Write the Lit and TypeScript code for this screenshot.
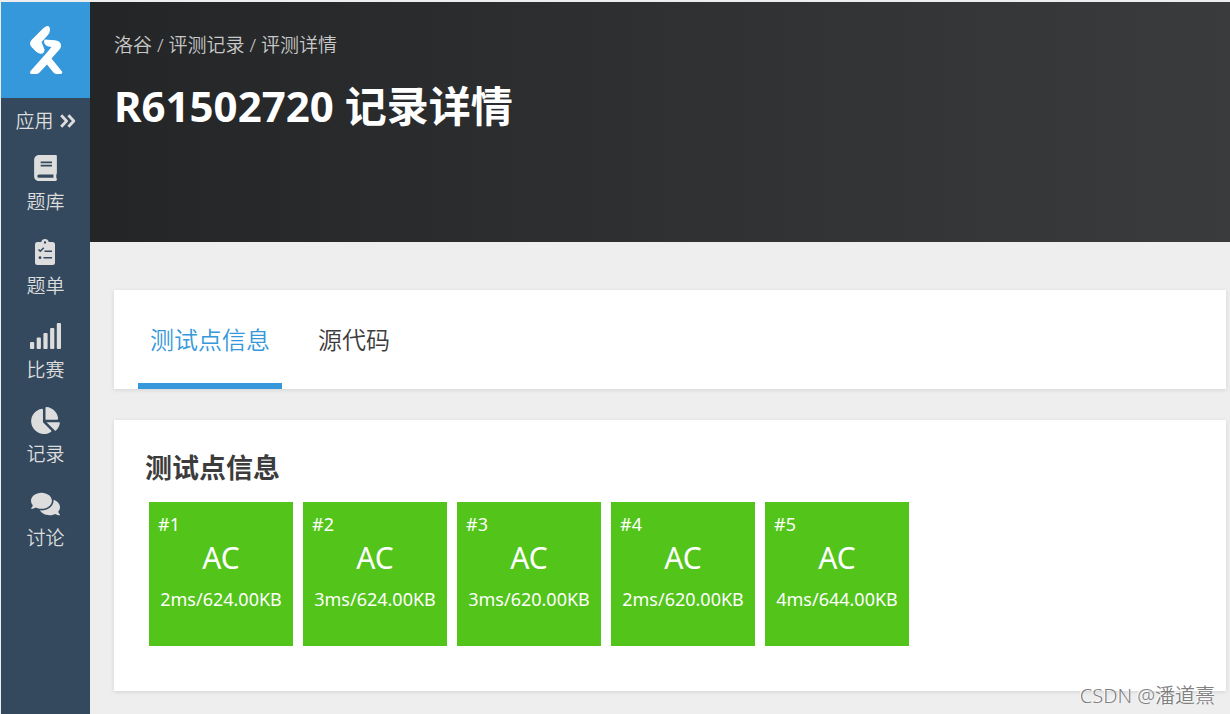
import { LitElement, html, css, svg } from "lit";
import { customElement, property, state } from "lit/decorators.js";

const bookIcon = svg`<svg viewBox="0 0 448 512" width="23" height="26" aria-hidden="true"><path fill="currentColor" d="M448 360V24c0-13.3-10.7-24-24-24H96C43 0 0 43 0 96v320c0 53 43 96 96 96h328c13.3 0 24-10.7 24-24v-16c0-7.5-3.5-14.3-8.9-18.7-4.2-15.4-4.2-59.3 0-74.7 5.4-4.3 8.900-11.1 8.900-18.600zM128 134c0-3.300 2.700-6 6-6h212c3.300 0 6 2.700 6 6v20c0 3.300-2.700 6-6 6H134c-3.300 0-6-2.700-6-6v-20zm0 64c0-3.300 2.700-6 6-6h212c3.300 0 6 2.700 6 6v20c0 3.300-2.700 6-6 6H134c-3.300 0-6-2.700-6-6v-20zm253.400 250H96c-17.700 0-32-14.300-32-32 0-17.600 14.400-32 32-32h285.400c-1.900 17.100-1.900 46.900 0 64z"/></svg>`;

const listIcon = svg`<svg viewBox="0 0 21 26" width="21" height="26" aria-hidden="true"><path fill="currentColor" fill-rule="evenodd" d="M2.500 3H6.200C6.600 1.300 8.100 0 10 0s3.400 1.300 3.800 3H17.500A2.500 2.500 0 0 1 20 5.500v18a2.500 2.500 0 0 1-2.500 2.500h-15A2.500 2.500 0 0 1 0 23.500v-18A2.500 2.500 0 0 1 2.500 3zM10 2.200a1.200 1.200 0 1 0 0 2.400 1.200 1.200 0 0 0 0-2.400z"/><path fill="none" stroke="#34495e" stroke-width="1.500" d="M3.500 10.500l1.800 1.800L8.800 8.700M9.500 12.300H17M8.500 18.700H17"/><circle cx="5" cy="18.700" r="1.400" fill="#34495e"/></svg>`;

const signalIcon = svg`<svg viewBox="0 0 31 26" width="31" height="26" aria-hidden="true"><g fill="currentColor"><rect x="0" y="19" width="4.200" height="7" rx="1"/><rect x="6.700" y="14.500" width="4.200" height="11.500" rx="1"/><rect x="13.400" y="10" width="4.200" height="16" rx="1"/><rect x="20.100" y="5" width="4.200" height="21" rx="1"/><rect x="26.800" y="0" width="4.200" height="26" rx="1"/></g></svg>`;

const pieIcon = svg`<svg viewBox="0 0 544 512" width="29" height="27" aria-hidden="true"><path fill="currentColor" d="M527.79 288H290.5l158.03 158.03c6.04 6.04 15.98 6.53 22.19.68 38.7-36.46 65.32-85.61 73.13-140.86 1.34-9.46-6.51-17.85-16.06-17.85zm-15.83-64.8C503.72 103.74 408.26 8.28 288.8.04 279.68-.59 272 7.1 272 16.24V240h223.77c9.14 0 16.82-7.68 16.19-16.8zM224 288V50.71c0-9.55-8.39-17.4-17.84-16.06C86.99 51.49-4.1 155.6.14 280.37 4.5 408.51 114.83 513.59 243.03 511.98c50.4-.63 96.97-16.87 135.26-44.03 7.9-5.6 8.42-17.23 1.57-24.08L224 288z"/></svg>`;

const commentsIcon = svg`<svg viewBox="0 0 576 512" width="29" height="26" aria-hidden="true"><path fill="currentColor" d="M416 192c0-88.4-93.1-160-208-160S0 103.6 0 192c0 34.3 14.1 65.9 38 92-13.4 30.2-35.5 54.2-35.8 54.5-2.2 2.3-2.8 5.7-1.5 8.7S4.8 352 8 352c36.6 0 66.9-12.3 88.7-25 32.2 15.7 70.3 25 111.3 25 114.9 0 208-71.6 208-160zm122 220c23.9-26 38-57.7 38-92 0-66.9-53.5-124.2-129.3-148.1.9 6.6 1.3 13.3 1.3 20.1 0 105.9-107.7 192-240 192-10.8 0-21.3-.8-31.7-1.9C207.8 439.6 281.8 480 368 480c41 0 79.1-9.2 111.3-25 21.8 12.7 52.1 25 88.7 25 3.2 0 6.1-1.9 7.3-4.8 1.3-2.9.7-6.3-1.5-8.7-.3-.3-22.4-24.2-35.8-54.5z"/></svg>`;

const chevronsIcon = svg`<svg viewBox="0 0 16 14" width="16" height="14" aria-hidden="true"><path fill="none" stroke="currentColor" stroke-width="2.800" stroke-linejoin="round" d="M1.200 1.200L6.600 7l-5.400 5.800M8.400 1.200L13.800 7l-5.400 5.800"/></svg>`;

const logoIcon = svg`<svg viewBox="0 0 34 50" width="34" height="50" aria-hidden="true"><g fill="#fff"><path d="M14.500 3Q20.500-1.500 21 4.500 21 8 18.500 10.500L12.500 17l3 7.500Q15.500 29 11.500 28.800 9 28.500 7 26.500L2.500 22Q-0.500 18.500 2.500 15z"/><path d="M15.500 14.500L26 15.200Q32.500 16 32 21.500 31.800 23 30 25L22.500 33.500 33 46.500Q34 49 31 49H27.500Q25.500 49 24 47L18 39.500 10.500 47.500Q9 49 7 49H3Q0 49 1.500 46L18 27.500 22.500 22 18.500 21.300Q14 19 15.500 14.500z"/></g></svg>`;

const navItems = [
  { label: "题库", icon: bookIcon },
  { label: "题单", icon: listIcon },
  { label: "比赛", icon: signalIcon },
  { label: "记录", icon: pieIcon },
  { label: "讨论", icon: commentsIcon },
];

const testCases = [
  { id: 1, status: "AC", usage: "2ms/624.00KB" },
  { id: 2, status: "AC", usage: "3ms/624.00KB" },
  { id: 3, status: "AC", usage: "3ms/620.00KB" },
  { id: 4, status: "AC", usage: "2ms/620.00KB" },
  { id: 5, status: "AC", usage: "4ms/644.00KB" },
];

@customElement("side-bar")
class SideBar extends LitElement {
  static styles = css`
    :host {
      display: block;
      flex: none;
      width: 89px;
      background: #34495e;
      color: #ddd;
      font-size: 19px;
      font-weight: 350;
      line-height: 28px;
    }
    a {
      color: inherit;
      text-decoration: none;
    }
    .logo {
      display: flex;
      align-items: center;
      justify-content: center;
      height: 96px;
      background: #3498db;
    }
    .apps {
      display: flex;
      align-items: center;
      justify-content: center;
      gap: 6px;
      padding: 9px 0 20px;
    }
    .nav {
      display: flex;
      flex-direction: column;
      gap: 23px;
    }
    .item {
      display: flex;
      flex-direction: column;
      align-items: center;
      gap: 7px;
    }
    .icon {
      display: flex;
      align-items: center;
      height: 26px;
    }
  `;
  render() {
    return html`
      <a class="logo" href="#" aria-label="洛谷">${logoIcon}</a>
      <a class="apps" href="#apps">应用 ${chevronsIcon}</a>
      <nav class="nav">
        ${navItems.map(
          (n) => html`<a class="item" href="#nav"><span class="icon">${n.icon}</span><span>${n.label}</span></a>`
        )}
      </nav>
    `;
  }
}

@customElement("test-case")
class TestCase extends LitElement {
  static styles = css`
    :host {
      display: block;
      box-sizing: border-box;
      width: 144px;
      height: 144px;
      padding: 10px 9px;
      background: #52c41a;
      color: #fff;
      font-size: 18px;
      line-height: 24px;
    }
    .status {
      margin: 4px 0 11px;
      font-size: 30px;
      line-height: 36px;
      text-align: center;
    }
    .usage {
      text-align: center;
      white-space: nowrap;
    }
  `;
  @property({ type: Number }) number = 0;
  @property() status = "";
  @property() usage = "";
  render() {
    return html`
      <div>#${this.number}</div>
      <div class="status">${this.status}</div>
      <div class="usage">${this.usage}</div>
    `;
  }
}

@customElement("app-root")
class AppRoot extends LitElement {
  static styles = css`
    :host {
      display: flex;
      position: relative;
      box-sizing: border-box;
      min-height: 100vh;
      padding: 2px 0 0 1px;
      background: #eee;
      color: #3c3c3c;
      font-family: "Noto Sans", "Noto Sans CJK SC", sans-serif;
    }
    .page {
      flex: 1;
      min-width: 0;
    }
    .header {
      box-sizing: border-box;
      min-height: 240px;
      padding: 29px 24px;
      background: linear-gradient(to right, #232526, #3a3b3c);
      color: #fff;
    }
    .crumbs {
      color: #c8c8c8;
      font-size: 19px;
      font-weight: 350;
      line-height: 28px;
    }
    .crumbs a {
      color: inherit;
      text-decoration: none;
    }
    h1 {
      margin: 17px 0 0;
      font-size: 42px;
      line-height: 60px;
    }
    .content {
      display: flex;
      flex-direction: column;
      gap: 31px;
      padding: 48px 4px 23px 24px;
    }
    .card {
      background: #fff;
      box-shadow: 0 1px 4px rgba(26, 26, 26, 0.12);
    }
    .tabs {
      display: flex;
      gap: 24px;
      padding: 0 24px;
    }
    .tab {
      height: 99px;
      padding: 6px 12px 0;
      border: 0;
      border-bottom: 6px solid transparent;
      background: none;
      color: inherit;
      font: inherit;
      font-size: 24px;
      font-weight: 350;
      line-height: 36px;
      cursor: pointer;
    }
    .tab.active {
      border-color: #3498db;
      color: #3498db;
    }
    .results {
      padding: 32px 31px 45px;
    }
    h2 {
      margin: 0 0 18px;
      font-size: 27px;
      line-height: 32px;
    }
    .cases {
      display: flex;
      flex-wrap: wrap;
      gap: 10px;
      padding-left: 4px;
    }
    .watermark {
      position: absolute;
      right: 15px;
      bottom: 4px;
      color: #808080;
      font-size: 20px;
      font-weight: 350;
      line-height: 28px;
      text-shadow: -1px -1px 0 #fff;
    }
  `;
  @state() private tab = 0;
  render() {
    return html`
      <side-bar></side-bar>
      <div class="page">
        <header class="header">
          <nav class="crumbs"><a href="#">洛谷</a> / <a href="#records">评测记录</a> / <span>评测详情</span></nav>
          <h1>R61502720 记录详情</h1>
        </header>
        <main class="content">
          <div class="card tabs" role="tablist">
            ${["测试点信息", "源代码"].map(
              (t, i) => html`<button
                class="tab ${this.tab === i ? "active" : ""}"
                role="tab"
                aria-selected=${this.tab === i}
                @click=${() => (this.tab = i)}
              >${t}</button>`
            )}
          </div>
          <section class="card results">
            <h2>测试点信息</h2>
            <div class="cases">
              ${testCases.map(
                (c) => html`<test-case .number=${c.id} .status=${c.status} .usage=${c.usage}></test-case>`
              )}
            </div>
          </section>
        </main>
      </div>
      <div class="watermark">CSDN @潘道熹</div>
    `;
  }
}
